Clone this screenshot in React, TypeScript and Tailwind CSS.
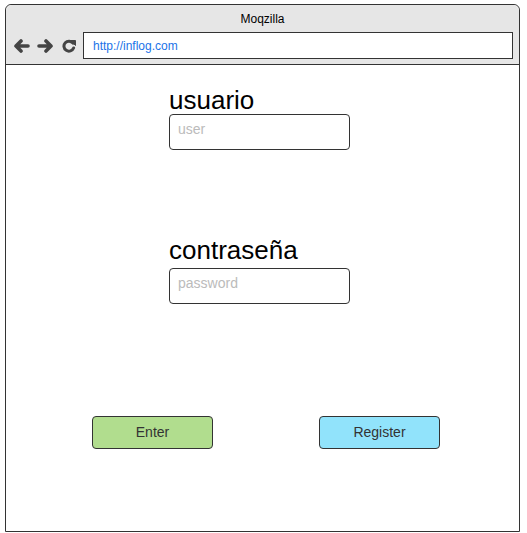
const Arrow = ({ flip }: { flip?: boolean }) => (
  <svg width="17" height="14" viewBox="0 0 17 14" className={flip ? "-scale-x-100" : ""}>
    <path d="M15 7H3M8 2L3 7l5 5" fill="none" stroke="#444" strokeWidth="3.6" strokeLinecap="round" strokeLinejoin="round" />
  </svg>
);

const Reload = () => (
  <svg width="16" height="14" viewBox="0 0 16 14">
    <path d="M12 4.2A5 5 0 1 0 12.6 9" fill="none" stroke="#444" strokeWidth="3" strokeLinecap="round" />
    <path d="M9.5 1.5h5v5z" fill="#444" stroke="#444" strokeWidth="1" strokeLinejoin="round" />
  </svg>
);

export default function App() {
  return (
    <div className="w-[527px] h-[533px] bg-white pt-[4px] pl-[5px] font-['Liberation_Sans',Arial,sans-serif]">
      <div className="w-[515px] h-[528px] border border-[#333] rounded-t-[6px] flex flex-col">
        {/* browser chrome */}
        <div className="h-[60px] bg-[#e6e6e6] border-b border-[#333] rounded-t-[6px] flex flex-col">
          <div className="h-[27px] flex items-center justify-center text-[12px] text-black">Moqzilla</div>
          <div className="flex items-center pl-[7px] pr-[6px]">
            <Arrow />
            <div className="ml-[7px]"><Arrow flip /></div>
            <div className="ml-[7px]"><Reload /></div>
            <div className="ml-[6px] flex-1 h-[27px] bg-white border border-[#333] flex items-center pl-[9px] text-[12px] text-[#1a73e8]">
              http://inflog.com
            </div>
          </div>
        </div>
        {/* content */}
        <div className="flex-1 flex flex-col">
          <div className="pl-[163px] pt-[22px] flex flex-col">
            <div className="text-[26px] leading-[27px] text-black">usuario</div>
            <div className="w-[181px] h-[36px] border border-[#333] rounded-[4px] pl-[8px] pt-[6px] text-[14px] text-[#bbb] leading-[16px]">user</div>
            <div className="mt-[87px] mb-[4px] text-[26px] leading-[27px] text-black">contraseña</div>
            <div className="w-[181px] h-[36px] border border-[#333] rounded-[4px] pl-[8px] pt-[6px] text-[14px] text-[#bbb] leading-[16px]">password</div>
          </div>
          <div className="mt-[112px] flex pl-[86px] gap-[106px]">
            <button className="w-[121px] h-[33px] bg-[#b1dd8e] border border-[#333] rounded-[4px] text-[14px] text-[#333]">Enter</button>
            <button className="w-[121px] h-[33px] bg-[#91e3fb] border border-[#333] rounded-[4px] text-[14px] text-[#333]">Register</button>
          </div>
        </div>
      </div>
    </div>
  );
}
